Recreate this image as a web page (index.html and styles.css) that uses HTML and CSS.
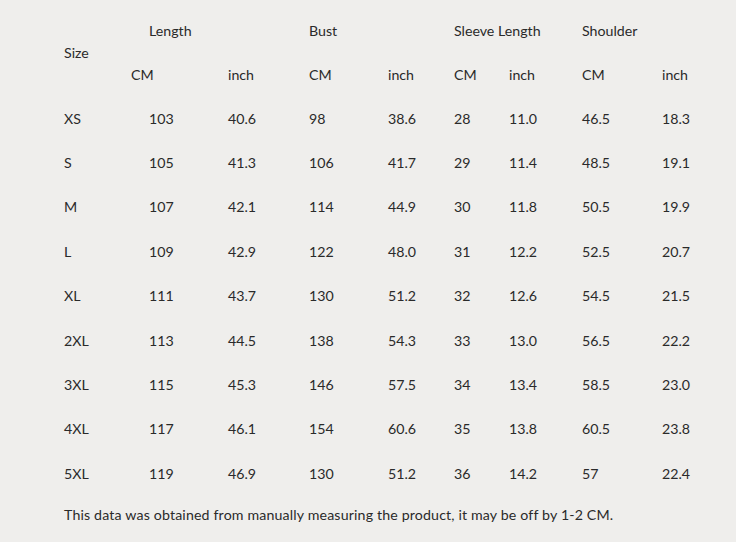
FILE: index.html
```html
<!DOCTYPE html>
<html>
<head>
<meta charset="utf-8">
<link rel="stylesheet" href="styles.css">
</head>
<body>
<div class="sheet">
  <div class="grid head">
    <div class="size">Size</div>
    <div class="grp g-len">Length</div>
    <div class="grp g-bust">Bust</div>
    <div class="grp g-sl">Sleeve Length</div>
    <div class="grp g-sh">Shoulder</div>
    <div class="c2 unit">CM</div>
    <div class="c3 unit">inch</div>
    <div class="c4 unit">CM</div>
    <div class="c5 unit">inch</div>
    <div class="c6 unit">CM</div>
    <div class="c7 unit">inch</div>
    <div class="c8 unit">CM</div>
    <div class="c9 unit">inch</div>
  </div>
  <div class="grid body" id="rows">
    <div>XS</div><div class="pad">103</div><div>40.6</div><div>98</div><div>38.6</div><div>28</div><div>11.0</div><div>46.5</div><div>18.3</div>
    <div>S</div><div class="pad">105</div><div>41.3</div><div>106</div><div>41.7</div><div>29</div><div>11.4</div><div>48.5</div><div>19.1</div>
    <div>M</div><div class="pad">107</div><div>42.1</div><div>114</div><div>44.9</div><div>30</div><div>11.8</div><div>50.5</div><div>19.9</div>
    <div>L</div><div class="pad">109</div><div>42.9</div><div>122</div><div>48.0</div><div>31</div><div>12.2</div><div>52.5</div><div>20.7</div>
    <div>XL</div><div class="pad">111</div><div>43.7</div><div>130</div><div>51.2</div><div>32</div><div>12.6</div><div>54.5</div><div>21.5</div>
    <div>2XL</div><div class="pad">113</div><div>44.5</div><div>138</div><div>54.3</div><div>33</div><div>13.0</div><div>56.5</div><div>22.2</div>
    <div>3XL</div><div class="pad">115</div><div>45.3</div><div>146</div><div>57.5</div><div>34</div><div>13.4</div><div>58.5</div><div>23.0</div>
    <div>4XL</div><div class="pad">117</div><div>46.1</div><div>154</div><div>60.6</div><div>35</div><div>13.8</div><div>60.5</div><div>23.8</div>
    <div>5XL</div><div class="pad">119</div><div>46.9</div><div>130</div><div>51.2</div><div>36</div><div>14.2</div><div>57</div><div>22.4</div>
  </div>
  <p class="note">This data was obtained from manually measuring the product, it may be off by 1-2 CM.</p>
</div>
</body>
</html>
```
FILE: styles.css
```css
html, body {
  margin: 0;
  padding: 0;
  background: #efeeec;
}
body {
  width: 736px;
  height: 542px;
  overflow: hidden;
  font-family: "Lato", "Liberation Sans", sans-serif;
  font-size: 14.2px;
  color: #2a2a2a;
}
.sheet {
  padding: 19px 0 0 64px;
}
.grid {
  display: grid;
  grid-template-columns: 67px 97px 81px 79px 66px 55px 73px 80px 70px;
  align-items: center;
}
.head {
  grid-template-rows: 22px 22px 22px;
}
.size {
  grid-column: 1;
  grid-row: 1 / 4;
}
.grp { grid-row: 1; white-space: nowrap; }
.g-len { grid-column: 2 / 4; padding-left: 18px; }
.g-bust { grid-column: 4 / 6; }
.g-sl { grid-column: 6 / 8; }
.g-sh { grid-column: 8 / 10; }
.unit { grid-row: 3; }
.c2 { grid-column: 2; }
.c3 { grid-column: 3; }
.c4 { grid-column: 4; }
.c5 { grid-column: 5; }
.c6 { grid-column: 6; }
.c7 { grid-column: 7; }
.c8 { grid-column: 8; }
.c9 { grid-column: 9; }
.body {
  margin-top: 11px;
  grid-auto-rows: 44.4px;
}
.pad { padding-left: 18px; }
.note {
  margin: 8px 0 0;
  line-height: 22px;
  letter-spacing: 0.15px;
}
```
